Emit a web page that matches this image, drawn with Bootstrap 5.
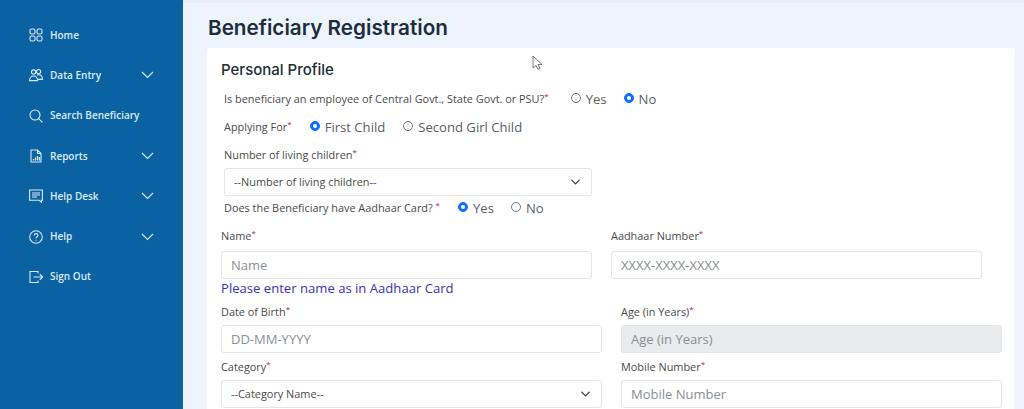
<!DOCTYPE html>
<html lang="en">
<head>
<meta charset="utf-8">
<title>Beneficiary Registration</title>
<link href="https://cdn.jsdelivr.net/npm/bootstrap@5.3.0/dist/css/bootstrap.min.css" rel="stylesheet">
<style>
html,body{height:409px;overflow:hidden}
body{background:#edf4fd;font-family:"Open Sans",sans-serif;color:#444}
.side-rail{width:183px;height:409px;background:#0a62a2;padding-top:15px;flex:none}
.rail-item{height:40.3px;padding-left:29px;padding-right:29px;color:#dbeaf5;font-size:10px;font-weight:600;text-decoration:none}
.rail-item:hover{color:#fff}
.rail-icon{width:14px;height:14px;margin-right:7px;flex:none;fill:none;stroke:#dbeaf5;stroke-width:1.1}
.rail-chev{width:13px;height:8px;margin-left:auto;fill:none;stroke:#dbeaf5;stroke-width:1.1}
.work-area{flex:1;min-width:0;border-top:3px solid #e6edf5;padding-left:24px;padding-right:9px}
.page-title{font-family:Inter,sans-serif;font-weight:600;font-size:20.7px;color:#1c2d3d;margin:12px 0 8px 1px;line-height:25px}
.form-sheet{background:#fff;border-radius:3px;height:370px;padding:12px 14px 0}
.sheet-title{font-family:Inter,sans-serif;font-weight:500;font-size:15px;color:#222d36;line-height:20px;margin:0 0 5px}
.lbl{font-size:10.9px;font-weight:500;color:#4a4a4a;line-height:14px;margin:0}
.lbl sup{color:#c8102e;font-size:8px;top:-.5em}
.radio-row{padding-left:3px;height:28px}
.radio-row-short{height:24px}
.radio-opt{font-size:13.1px;color:#5a5f64;margin:0 0 0 17px;display:flex;align-items:center;gap:5px;line-height:16px}
.radio-first{margin-left:18px}
.radio-first-far{margin-left:22px}
.radio-opt .form-check-input{margin:0;width:10px;height:10px;flex:none;margin-top:-3px;border-color:#777}
.radio-opt .form-check-input:checked{background-color:#0d6efd;border-color:#0d6efd}
.fld-input,.fld-select{height:28px;font-size:13px;border:1px solid #e3e5e8;border-radius:3px;padding:0 9px;color:#444;box-shadow:none}
.fld-input::placeholder{color:#888f96}
.fld-select{font-size:10.9px;font-weight:500;color:#4a4a4a;background-size:13px 10px;background-position:right 9px center}
.fld-input:disabled{background:#e9ebec;border-color:#e3e5e8}
.select-block{width:371px;padding-left:3px}
.select-label{padding:7px 0 6px}
.grid-narrow{display:grid;grid-template-columns:371px 371px;column-gap:19px;margin-top:9px}
.grid-wide{display:grid;grid-template-columns:381px 381px;column-gap:19px}
.gap-first{margin-top:9px}
.gap-next{margin-top:7px}
.lbl-gap-big{padding-bottom:8px}
.lbl-gap{padding-bottom:6px}
.fld-hint{font-size:13.1px;color:#3a2fb8;line-height:16px;margin-top:1px}
.cursor-mark{position:absolute;left:532px;top:55px;width:11px;height:16px}
</style>
</head>
<body>
<div class="d-flex">
  <nav class="side-rail d-flex flex-column">
    <a class="rail-item d-flex align-items-center" href="#">
      <svg class="rail-icon" viewBox="0 0 14 14"><rect x="1" y="1" width="5" height="5" rx="1.6"/><rect x="8" y="1" width="5" height="5" rx="1.6"/><rect x="1" y="8" width="5" height="5" rx="1.6"/><rect x="8" y="8" width="5" height="5" rx="1.6"/></svg>Home</a>
    <a class="rail-item d-flex align-items-center" href="#">
      <svg class="rail-icon" viewBox="0 0 14 14"><circle cx="4.6" cy="4" r="2.1"/><circle cx="9.6" cy="3.6" r="2.1"/><path d="M.6 12.6c0-2.8 1.6-4.6 4-4.6s4 1.800 4 4.600zM8 7.200c.6-.4 1.100-.5 1.700-.5 2.200 0 3.700 1.900 3.700 4.700H9"/></svg>Data Entry
      <svg class="rail-chev" viewBox="0 0 13 8"><path d="M1 1l5.500 5.500L12 1"/></svg></a>
    <a class="rail-item d-flex align-items-center" href="#">
      <svg class="rail-icon" viewBox="0 0 14 14"><circle cx="6" cy="6" r="5"/><path d="M9.600 9.600l3.800 3.800"/></svg>Search Beneficiary</a>
    <a class="rail-item d-flex align-items-center" href="#">
      <svg class="rail-icon" viewBox="0 0 14 14"><path d="M2 13V1h6.500L12 4.500V13zM8.500 1v3.500H12"/><path d="M4.500 11.500v-1.500M6.500 11.500V8.500M8.500 11.500V7M10.500 11.500V8" stroke-width="1.300"/></svg>Reports
      <svg class="rail-chev" viewBox="0 0 13 8"><path d="M1 1l5.500 5.500L12 1"/></svg></a>
    <a class="rail-item d-flex align-items-center" href="#">
      <svg class="rail-icon" viewBox="0 0 14 14"><path d="M.6 1h12.800v10.200h-1v2l-2.400-2H.6z"/><path d="M3 4h8M3 6h8M3 8h5"/></svg>Help Desk
      <svg class="rail-chev" viewBox="0 0 13 8"><path d="M1 1l5.500 5.500L12 1"/></svg></a>
    <a class="rail-item d-flex align-items-center" href="#">
      <svg class="rail-icon" viewBox="0 0 14 14"><circle cx="7" cy="7" r="6.300"/><path d="M5.200 5.500c0-1.200.8-1.900 1.900-1.900s1.900.7 1.900 1.700c0 1.500-1.900 1.500-1.900 3M7.100 9.800v1"/></svg>Help
      <svg class="rail-chev" viewBox="0 0 13 8"><path d="M1 1l5.500 5.500L12 1"/></svg></a>
    <a class="rail-item d-flex align-items-center" href="#">
      <svg class="rail-icon" viewBox="0 0 14 14"><path d="M9 3.500V1.500H1v11h8v-2M4.500 7h9M10.800 4.200L13.600 7l-2.800 2.800"/></svg>Sign Out</a>
  </nav>
  <main class="work-area">
    <h1 class="page-title">Beneficiary Registration</h1>
    <section class="form-sheet">
      <h2 class="sheet-title">Personal Profile</h2>
      <div class="radio-row d-flex align-items-center">
        <span class="lbl">Is beneficiary an employee of Central Govt., State Govt. or PSU?<sup>*</sup></span>
        <label class="radio-opt radio-first-far"><input class="form-check-input" type="radio" name="q1">Yes</label>
        <label class="radio-opt"><input class="form-check-input" type="radio" name="q1" checked>No</label>
      </div>
      <div class="radio-row d-flex align-items-center">
        <span class="lbl">Applying For<sup>*</sup></span>
        <label class="radio-opt radio-first"><input class="form-check-input" type="radio" name="q2" checked>First Child</label>
        <label class="radio-opt radio-first"><input class="form-check-input" type="radio" name="q2">Second Girl Child</label>
      </div>
      <div class="select-block">
        <label class="lbl d-block select-label">Number of living children<sup>*</sup></label>
        <select class="form-select fld-select"><option>--Number of living children--</option></select>
      </div>
      <div class="radio-row radio-row-short d-flex align-items-center">
        <span class="lbl">Does the Beneficiary have Aadhaar Card? <sup>*</sup></span>
        <label class="radio-opt radio-first"><input class="form-check-input" type="radio" name="q3" checked>Yes</label>
        <label class="radio-opt"><input class="form-check-input" type="radio" name="q3">No</label>
      </div>
      <div class="grid-narrow">
        <div>
          <label class="lbl d-block lbl-gap-big">Name<sup>*</sup></label>
          <input class="form-control fld-input" placeholder="Name">
          <div class="fld-hint">Please enter name as in Aadhaar Card</div>
        </div>
        <div>
          <label class="lbl d-block lbl-gap-big">Aadhaar Number<sup>*</sup></label>
          <input class="form-control fld-input" placeholder="XXXX-XXXX-XXXX">
        </div>
      </div>
      <div class="grid-wide gap-first">
        <div>
          <label class="lbl d-block lbl-gap">Date of Birth<sup>*</sup></label>
          <input class="form-control fld-input" placeholder="DD-MM-YYYY">
        </div>
        <div>
          <label class="lbl d-block lbl-gap">Age (in Years)<sup>*</sup></label>
          <input class="form-control fld-input" placeholder="Age (in Years)" disabled>
        </div>
      </div>
      <div class="grid-wide gap-next">
        <div>
          <label class="lbl d-block lbl-gap">Category<sup>*</sup></label>
          <select class="form-select fld-select"><option>--Category Name--</option></select>
        </div>
        <div>
          <label class="lbl d-block lbl-gap">Mobile Number<sup>*</sup></label>
          <input class="form-control fld-input" placeholder="Mobile Number">
        </div>
      </div>
    </section>
  </main>
</div>
<svg class="cursor-mark" viewBox="0 0 11 16"><path d="M1 1v12l3-2.500 2 4 2-1-2-4h4z" fill="#fff" stroke="#555" stroke-width=".8"/></svg>
<script src="https://cdn.jsdelivr.net/npm/bootstrap@5.3.0/dist/js/bootstrap.bundle.min.js"></script>
</body>
</html>
